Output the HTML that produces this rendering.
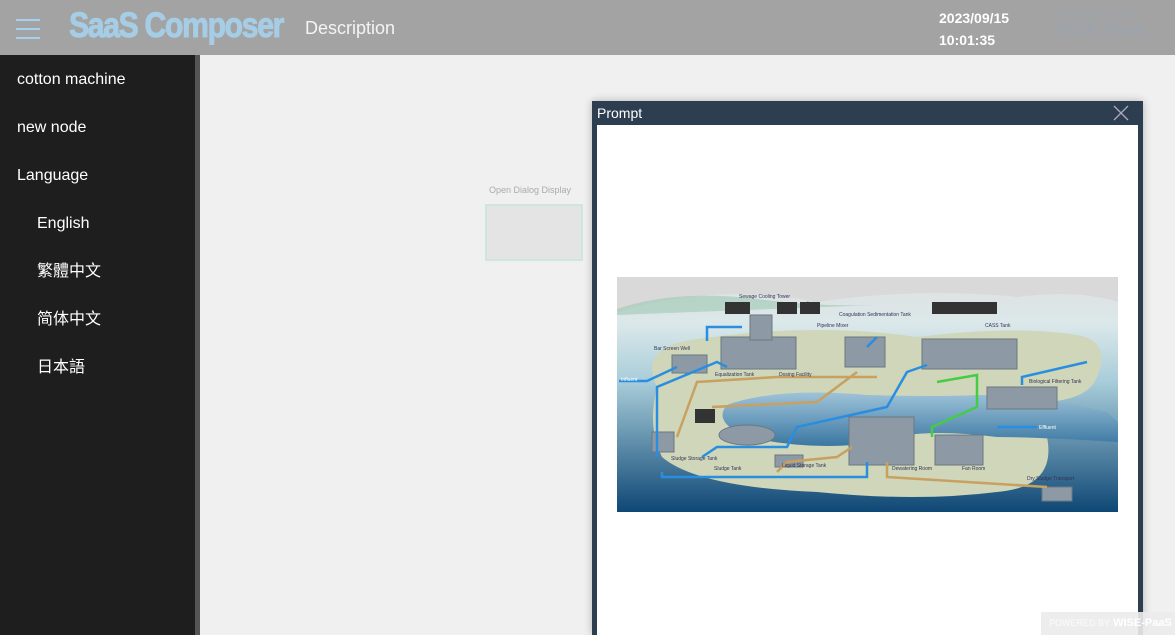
<!DOCTYPE html>
<html><head><meta charset="utf-8"><style>
*{margin:0;padding:0;box-sizing:border-box}
html,body{width:1175px;height:635px;overflow:hidden}
body{background:#f0f0f0;font-family:"Liberation Sans","Noto Sans CJK TC",sans-serif;position:relative}
.hdr{position:absolute;left:0;top:0;width:1175px;height:55px;background:#a3a3a3}
.ham{position:absolute;left:16px;top:19px;width:24px}
.ham i{display:block;height:2px;background:#a6d1ec;margin-bottom:7px}
.logo{position:absolute;left:69px;top:6px;font:bold 35px "Liberation Sans",sans-serif;color:#a6cde6;letter-spacing:-1.5px;transform:scaleX(.86);transform-origin:left;-webkit-text-stroke:1px #a6cde6}
.desc{position:absolute;left:305px;top:18px;font-size:18px;color:#f4f4f4}
.dt{position:absolute;left:939px;top:7px;font-weight:bold;font-size:14px;color:#fff;line-height:22px}
.pw{position:absolute;left:1055px;top:9px;color:#9aa4b4;font-weight:bold;line-height:14px;opacity:.6}
.side{position:absolute;left:0;top:55px;width:195px;height:580px;background:#1e1e1e;color:#fff;font-size:16px;padding-top:2px}
.side div{height:48px;line-height:46px;padding-left:17px}
.side .s{padding-left:37px}
.strip{position:absolute;left:195px;top:55px;width:5px;height:580px;background:#555}
.lbl{position:absolute;left:489px;top:185px;font-size:9px;color:#aaa}
.box{position:absolute;left:485px;top:204px;width:98px;height:57px;background:#e4e4e4;border:2px solid #cfe6de}
.dlg{position:absolute;left:592px;top:101px;width:551px;height:534px;background:#2c3e50;box-shadow:0 0 8px rgba(0,0,0,.25)}
.dlg .t{position:absolute;left:5px;top:4px;color:#fff;font-size:14px}
.dlg .x{position:absolute;right:14px;top:4px}
.dlg .c{position:absolute;left:5px;top:24px;width:541px;height:510px;background:#fff}
.foot{position:absolute;left:1041px;top:612px;width:134px;height:23px;background:rgba(235,235,235,.9);font-size:11px;color:#fff;line-height:23px;padding-left:8px}
</style></head><body>
<div class="hdr">
<div class="ham"><i></i><i></i><i></i></div>
<div class="logo">SaaS Composer</div>
<div class="desc">Description</div>
<div class="dt">2023/09/15<br>10:01:35</div>
<div class="pw"><span style="font-size:12px;font-weight:normal">POWERED BY</span><br><span style="font-size:17px">WISE-PaaS</span></div>
</div>
<div class="side">
<div>cotton machine</div><div>new node</div><div>Language</div>
<div class="s">English</div><div class="s">繁體中文</div><div class="s">简体中文</div><div class="s">日本語</div>
</div>
<div class="strip"></div>
<div class="lbl">Open Dialog Display</div>
<div class="box"></div>
<div class="dlg">
<div class="t">Prompt</div>
<svg class="x" width="16" height="16" viewBox="0 0 16 16"><path d="M1 1L15 15M15 1L1 15" stroke="#aab" stroke-width="1.3"/></svg>
<div class="c">
<svg style="position:absolute;left:20px;top:152px" width="501" height="235" viewBox="0 0 501 235">
<defs>
<linearGradient id="sky" x1="0" y1="0" x2="0" y2="1"><stop offset="0" stop-color="#e0e0e0"/><stop offset=".2" stop-color="#dbe8ea"/><stop offset=".45" stop-color="#a7ccd9"/><stop offset="1" stop-color="#0e4775"/></linearGradient>
<linearGradient id="w" x1="0" y1="0" x2="0" y2="1"><stop offset="0" stop-color="#9ec3d8"/><stop offset="1" stop-color="#3a77a2"/></linearGradient>
</defs>
<rect width="501" height="235" fill="url(#sky)"/>
<path d="M0 35 Q100 5 200 25 Q300 10 400 20 Q460 12 501 25 L501 0 L0 0Z" fill="#d9d9d9"/>
<path d="M0 32 Q60 12 140 22 Q200 30 260 28 L0 38Z" fill="#9cc8b4" opacity=".6"/>
<path d="M40 110 Q20 70 80 62 Q200 45 300 60 Q400 48 460 58 Q495 64 480 100 Q470 125 420 125 L430 160 Q440 210 380 215 Q300 225 200 215 Q80 210 45 180 Q30 150 40 110Z" fill="#cfd6b9"/>
<path d="M110 128 Q160 110 250 118 Q320 120 360 118 Q420 118 490 135 L501 145 L501 165 Q420 160 380 160 Q300 150 260 165 Q200 175 130 160 Q95 145 110 128Z" fill="url(#w)"/>
<g fill="#8d9aa5" stroke="#6c7880">
<rect x="55" y="78" width="35" height="18"/><rect x="104" y="60" width="75" height="32"/><rect x="133" y="38" width="22" height="25"/>
<rect x="228" y="60" width="40" height="30"/><rect x="305" y="62" width="95" height="30"/>
<rect x="370" y="110" width="70" height="22"/><rect x="232" y="140" width="65" height="48"/>
<rect x="318" y="158" width="48" height="30"/><rect x="35" y="155" width="22" height="20"/>
<ellipse cx="130" cy="158" rx="28" ry="10"/><rect x="158" y="178" width="28" height="12"/>
<rect x="425" y="210" width="30" height="14"/>
</g>
<g fill="none" stroke-width="2.5">
<path d="M2 104 L30 104 L60 90 M90 64 L90 50 L125 50 M40 180 L40 110 L100 85 L110 90 M45 195 L45 200 L130 200 L250 200 L250 185 M85 180 L100 170 L170 170 L180 150 L270 130 L290 95 L310 88 M190 25 L195 30 M405 108 L405 100 L470 85 M380 150 L420 150 M250 70 L260 60" stroke="#2a8ee0"/>
<path d="M60 160 L80 105 L160 100 L260 100 M95 130 L200 125 L240 95 M160 195 L170 185 L220 180 L235 170 M270 185 L270 200 L430 210" stroke="#c8a060"/>
<path d="M320 105 L360 98 L360 130 L315 150 L315 160" stroke="#44cc44"/>
</g>
<g fill="#333"><rect x="108" y="25" width="25" height="12"/><rect x="160" y="25" width="20" height="12"/><rect x="183" y="25" width="20" height="12"/><rect x="315" y="25" width="65" height="12"/><rect x="78" y="132" width="20" height="14"/></g>
<g font-size="5" fill="#335" font-family="Liberation Sans,sans-serif">
<text x="122" y="21">Sewage Cooling Tower</text><text x="222" y="39">Coagulation Sedimentation Tank</text><text x="200" y="50">Pipeline Mixer</text><text x="368" y="50">CASS Tank</text>
<text x="37" y="73">Bar Screen Well</text><text x="98" y="99">Equalization Tank</text><text x="162" y="99">Dosing Facility</text><text x="412" y="106">Biological Filtering Tank</text>
<text x="54" y="183">Sludge Storage Tank</text><text x="97" y="193">Sludge Tank</text><text x="165" y="190">Liquid Storage Tank</text><text x="275" y="193">Dewatering Room</text><text x="345" y="193">Fan Room</text><text x="410" y="203">Dry Sludge Transport</text>
<text x="4" y="104" fill="#fff">Influent</text><text x="422" y="152" fill="#fff">Effluent</text></g>
</svg>
</div>
</div>
<div class="foot"><span style="font-size:9px;opacity:.8">POWERED BY</span> <b>WISE-PaaS</b></div>
</body></html>
